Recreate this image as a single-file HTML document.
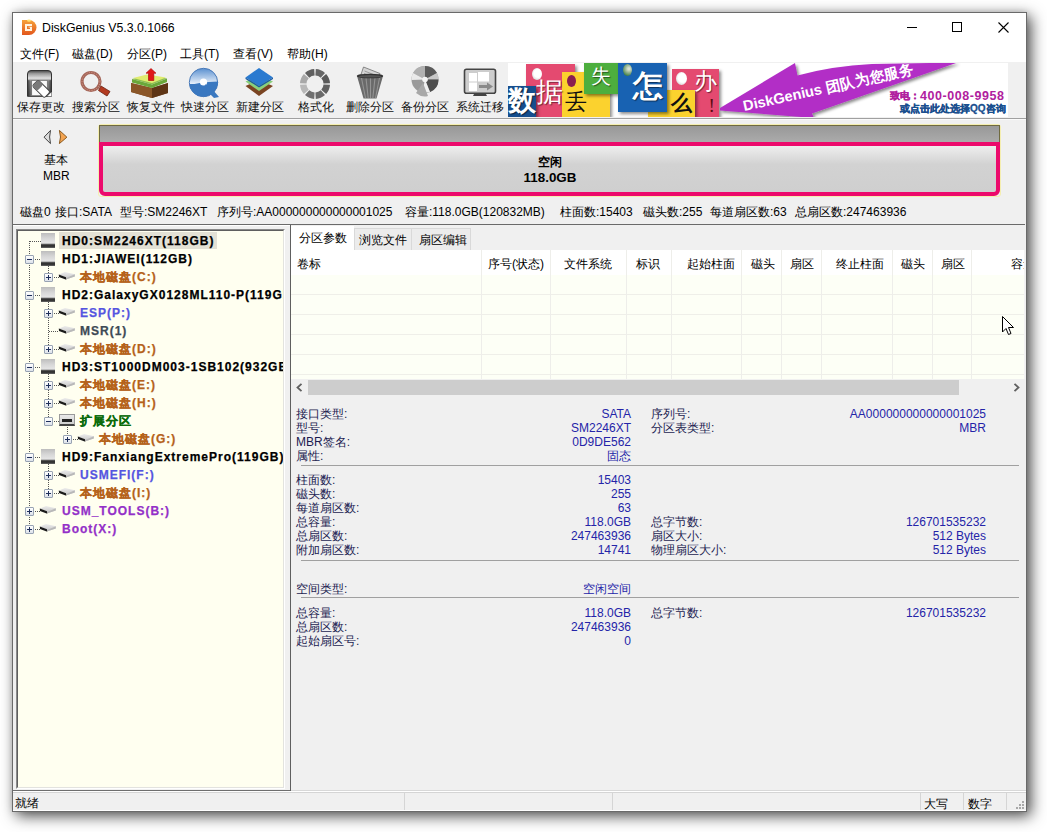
<!DOCTYPE html>
<html><head><meta charset="utf-8">
<style>
*{box-sizing:border-box;margin:0;padding:0}
html,body{width:1047px;height:832px;overflow:hidden;background:#fff}
body{position:relative;font-family:"Liberation Sans",sans-serif;font-size:12px;color:#000}
.a{position:absolute}
.t{position:absolute;white-space:nowrap;line-height:14px}
svg{position:absolute;overflow:visible}
</style></head><body>

<div class="a" style="left:12px;top:12px;width:1015px;height:800px;background:#f0f0f0;border:1px solid #6a6a6a;box-shadow:4px 4px 14px rgba(0,0,0,.7),0 0 6px rgba(0,0,0,.1)"></div>
<div class="a" style="left:13px;top:13px;width:1013px;height:49px;background:#fff"></div>
<svg style="left:22px;top:19px" width="15" height="16" viewBox="0 0 15 16">
<defs><linearGradient id="ig" x1="0" y1="0" x2="0" y2="1"><stop offset="0" stop-color="#f6a23a"/><stop offset="1" stop-color="#e2561c"/></linearGradient></defs>
<path d="M0 1 H7 A7.5 7.5 0 0 1 7 16 H0 Z" fill="url(#ig)"/>
<path d="M3 5 H10 V7 H5 V10 H8 V8.5 H6.5 V7.8 H10 V12 H3 Z" fill="#fff4e0"/>
<ellipse cx="7" cy="1.6" rx="2" ry="1.2" fill="#ffe070"/>
</svg>
<div class="t" style="left:42px;top:21px;font-size:12.3px">DiskGenius V5.3.0.1066</div>
<div class="a" style="left:907px;top:27px;width:10px;height:1px;background:#000"></div>
<div class="a" style="left:952px;top:22px;width:10px;height:10px;border:1px solid #000"></div>
<svg style="left:997.5px;top:21.5px" width="11" height="11"><path d="M0.5 0.5 L10.5 10.5 M10.5 0.5 L0.5 10.5" stroke="#000" stroke-width="1.1"/></svg>
<div class="t" style="left:20px;top:47px;">文件(F)</div>
<div class="t" style="left:72px;top:47px;">磁盘(D)</div>
<div class="t" style="left:127px;top:47px;">分区(P)</div>
<div class="t" style="left:180px;top:47px;">工具(T)</div>
<div class="t" style="left:233px;top:47px;">查看(V)</div>
<div class="t" style="left:287px;top:47px;">帮助(H)</div>
<div class="a" style="left:13px;top:118px;width:1013px;height:1px;background:#a0a0a0"></div>
<div class="a" style="left:13px;top:119px;width:1013px;height:1px;background:#fafafa"></div>
<div class="t" style="left:17px;top:100px;color:#111">保存更改</div>
<div class="t" style="left:72px;top:100px;color:#111">搜索分区</div>
<div class="t" style="left:127px;top:100px;color:#111">恢复文件</div>
<div class="t" style="left:181px;top:100px;color:#111">快速分区</div>
<div class="t" style="left:236px;top:100px;color:#111">新建分区</div>
<div class="t" style="left:298px;top:100px;color:#111">格式化</div>
<div class="t" style="left:346px;top:100px;color:#111">删除分区</div>
<div class="t" style="left:401px;top:100px;color:#111">备份分区</div>
<div class="t" style="left:456px;top:100px;color:#111">系统迁移</div>
<svg style="left:27px;top:70px" width="26" height="27" viewBox="0 0 26 27"><defs><linearGradient id="sg" x1="0" y1="0" x2="0" y2="1"><stop offset="0" stop-color="#444"/><stop offset=".12" stop-color="#9a9a9a"/><stop offset=".3" stop-color="#e0e0e0"/><stop offset=".42" stop-color="#777"/><stop offset="1" stop-color="#333"/></linearGradient>
<linearGradient id="sg2" x1="0" y1="0" x2="1" y2="0"><stop offset="0" stop-color="#2a2a2a"/><stop offset=".15" stop-color="#aaa"/><stop offset=".85" stop-color="#aaa"/><stop offset="1" stop-color="#2a2a2a"/></linearGradient></defs>
<path d="M0.5 4 Q0.5 0.5 4 0.5 H21 Q24.5 0.5 24.5 4 V26.3 H0.5 Z" fill="url(#sg)" stroke="#333" stroke-width="1"/>
<rect x="1" y="10" width="23" height="16" fill="url(#sg2)" opacity=".55"/>
<rect x="4.8" y="10.6" width="15.4" height="15" fill="#fafafa" stroke="#555" stroke-width=".5"/>
<g transform="rotate(45 13 18)"><rect x="6" y="13.5" width="17" height="8.5" rx="2" fill="#fff" stroke="#444" stroke-width="1"/><rect x="6" y="13.5" width="7" height="8.5" rx="2" fill="#7a7a7a"/></g>
<path d="M20.5 26.3 H24.5 V22" fill="#fff"/></svg>
<svg style="left:78px;top:69px" width="34" height="28" viewBox="0 0 34 28"><circle cx="13" cy="12.5" r="9" fill="none" stroke="#a5675a" stroke-width="3.2"/>
<circle cx="13" cy="12.5" r="9" fill="none" stroke="#d99a8a" stroke-width="1" stroke-dasharray="1 1.5"/>
<path d="M23 17 L32 22.5 L29 27 L20.5 21.5 Z" fill="#b23a20" stroke="#6a2010" stroke-width=".8"/></svg>
<svg style="left:130px;top:67px" width="40" height="32" viewBox="0 0 40 32"><path d="M1 16 L22 21 L38 16 L38 26 L22 31 L1 25 Z" fill="#7b4a22"/>
<path d="M22 21 L38 16 L38 26 L22 31 Z" fill="#5e3516"/>
<path d="M1 16 L22 21 L22 31 L1 25 Z" fill="#8a5628"/>
<path d="M2 12 L17 8.5 L37 11.5 L22 17.5 Z" fill="#8fc050"/>
<path d="M2 12 L22 17.5 L37 11.5 L37 15 L22 21 L2 15.5 Z" fill="#6aa83a"/>
<path d="M3 11 L17 7.5 L36 10.5 L22 16 Z" fill="#e0ec70"/>
<path d="M21 1.5 L26 6.2 H23.8 V13.5 H18.5 V6.2 H16 Z" fill="#e01818" stroke="#a00" stroke-width=".6"/></svg>
<svg style="left:188px;top:67px" width="33" height="32" viewBox="0 0 33 32"><defs><linearGradient id="qg" x1="0" y1="0" x2="0" y2="1"><stop offset="0" stop-color="#5a90d0"/><stop offset=".55" stop-color="#e8f0fa"/><stop offset=".56" stop-color="#3a78c0"/><stop offset="1" stop-color="#2e68b0"/></linearGradient></defs>
<circle cx="15.5" cy="15.5" r="14.2" fill="url(#qg)" stroke="#4a7ab8" stroke-width="1"/>
<path d="M1.5 18.5 Q10 15 30 14.5 L30 17 Q28 25 18 29.5 L10 29 Q3 25 1.5 18.5 Z" fill="#3a78c0"/>
<circle cx="15.5" cy="15" r="3.6" fill="#fff"/>
<path d="M17 17 L25 23 L31 30 L26 31 L19 24 Z" fill="#3a78c0"/></svg>
<svg style="left:244px;top:67px" width="31" height="31" viewBox="0 0 31 31"><path d="M1.5 19 L15 13 L29 19 L15 29 Z" fill="#7a4422"/>
<path d="M1.5 14.5 L15 8.5 L29 14.5 L15 24 Z" fill="#8ad07a"/>
<path d="M1.5 10.5 L15 1 L29 10.5 L15 19 Z" fill="#2a7ad0"/>
<path d="M1.5 10.5 L15 19 L29 10.5 L29 12 L15 20.5 L1.5 12 Z" fill="#1a5aa0"/></svg>
<svg style="left:299px;top:68px" width="32" height="32" viewBox="0 0 32 32"><path d="M16.8 1.0 A15 15 0 0 1 26.0 4.9 L21.7 9.7 A8.5 8.5 0 0 0 16.4 7.5 Z" fill="#666"/><path d="M27.1 6.0 A15 15 0 0 1 31.0 15.2 L24.5 15.6 A8.5 8.5 0 0 0 22.3 10.3 Z" fill="#5a5a5a"/><path d="M31.0 16.8 A15 15 0 0 1 27.1 26.0 L22.3 21.7 A8.5 8.5 0 0 0 24.5 16.4 Z" fill="#606060"/><path d="M26.0 27.1 A15 15 0 0 1 16.8 31.0 L16.4 24.5 A8.5 8.5 0 0 0 21.7 22.3 Z" fill="#6a6a6a"/><path d="M15.2 31.0 A15 15 0 0 1 6.0 27.1 L10.3 22.3 A8.5 8.5 0 0 0 15.6 24.5 Z" fill="#707070"/><path d="M4.9 26.0 A15 15 0 0 1 1.0 16.8 L7.5 16.4 A8.5 8.5 0 0 0 9.7 21.7 Z" fill="#b8b8b8"/><path d="M1.0 15.2 A15 15 0 0 1 4.9 6.0 L9.7 10.3 A8.5 8.5 0 0 0 7.5 15.6 Z" fill="#a8a8a8"/><path d="M6.0 4.9 A15 15 0 0 1 15.2 1.0 L15.6 7.5 A8.5 8.5 0 0 0 10.3 9.7 Z" fill="#606060"/></svg>
<svg style="left:355px;top:66px" width="30" height="34" viewBox="0 0 30 34"><path d="M5.5 10 L8.5 1 L25 7.5 L23.5 11 Z" fill="#d4d4d4" stroke="#7a7a7a" stroke-width=".9"/>
<path d="M9.5 5 L21 9.5 M9 7.5 L19 11" stroke="#9a9a9a" stroke-width="1"/>
<path d="M2 10 L28 10 L21.5 32.5 L8.5 32.5 Z" fill="#6a6a6a"/>
<path d="M6.5 12 L10.5 32 M11 12 L13.2 32 M15.5 12 L15.5 32 M20 12 L17.8 32 M24.5 12 L20.5 32" stroke="#949494" stroke-width="1.1"/>
<ellipse cx="15" cy="10" rx="13.2" ry="2.3" fill="#333"/>
<ellipse cx="15" cy="10.3" rx="11.5" ry="1.3" fill="#555"/></svg>
<svg style="left:410px;top:65px" width="32" height="34" viewBox="0 0 32 34"><circle cx="15" cy="14.5" r="13.5" fill="#9a9a9a"/>
<path d="M15 14.5 L15 1 A13.5 13.5 0 0 1 27 8 Z" fill="#5a5a5a"/>
<path d="M15 14.5 L27 8 A13.5 13.5 0 0 1 28.5 14.5 Z" fill="#c8c8c8"/>
<path d="M15 14.5 L28.5 14.5 A13.5 13.5 0 0 1 20 27 Z" fill="#4e4e4e"/>
<path d="M15 14.5 L3 8 A13.5 13.5 0 0 1 15 1 Z" fill="#b0b0b0"/>
<path d="M15 14.5 L1.5 15 A13.5 13.5 0 0 1 3 8 Z" fill="#eaeaea"/>
<path d="M15 14.5 L20 27 L12 28 Z" fill="#f0f0f0"/>
<path d="M13 18 L18 31 Q12 33 6 28 Z" fill="#a8a8a8"/>
<circle cx="15" cy="14.5" r="2.8" fill="#f4f4f4"/></svg>
<svg style="left:463px;top:68px" width="35" height="30" viewBox="0 0 35 30"><rect x="1.5" y="1.3" width="31" height="24" rx="2" fill="#cdcdcd" stroke="#444" stroke-width="1.6"/>
<rect x="6" y="5" width="8" height="8.5" fill="#fff"/>
<rect x="15" y="4" width="11" height="9.5" fill="#fff"/>
<rect x="6" y="14.5" width="8" height="8.5" fill="#fff"/>
<path d="M16 17 H24 V14.5 L30 18.5 L24 22.5 V20 H16 Z" fill="#8a8a8a"/>
<path d="M11 26 H23 L24 28 H10 Z" fill="#444"/></svg>
<div class="a" style="left:508px;top:63px;width:500px;height:54px;background:#fff;overflow:hidden">
<div class="a" style="left:18px;top:1px;width:49px;height:53px;background:#e44a70;box-shadow:2px 2px 3px rgba(0,0,0,.45);"></div>
<div class="a" style="left:24px;top:5px;width:10px;height:12px;border-radius:50%;background:radial-gradient(circle at 60% 45%,#fff 45%,#bbb 100%)"></div>
<div class="a" style="left:0px;top:23px;width:28px;height:31px;background:#164e8e;box-shadow:2px 2px 3px rgba(0,0,0,.45);"></div>
<div class="a" style="left:54px;top:9px;width:48px;height:45px;background:#fbd22e;box-shadow:2px 2px 3px rgba(0,0,0,.45);"></div>
<div class="a" style="left:58.5px;top:12px;width:9.0px;height:12px;border-radius:50%;background:#8a1e50"></div>
<div class="a" style="left:76px;top:0px;width:34px;height:31px;background:#4dae3e;box-shadow:2px 2px 3px rgba(0,0,0,.45);"></div>
<div class="a" style="left:164px;top:6px;width:47px;height:48px;background:#e44a70;box-shadow:2px 2px 3px rgba(0,0,0,.45);"></div>
<div class="a" style="left:167.5px;top:8.5px;width:11.0px;height:13.0px;border-radius:50%;background:radial-gradient(circle at 60% 45%,#fff 45%,#bbb 100%)"></div>
<div class="a" style="left:140px;top:27px;width:47px;height:27px;background:#fbd22e;box-shadow:2px 2px 3px rgba(0,0,0,.45);"></div>
<div class="a" style="left:110px;top:0px;width:49px;height:49px;background:#1862b2;box-shadow:2px 2px 3px rgba(0,0,0,.45);"></div>
<div class="a" style="left:114.5px;top:1px;width:9.0px;height:12px;border-radius:50%;background:radial-gradient(circle at 65% 40%,#d8e0d0 10%,#3a7a40 80%)"></div>
<div class="t" style="left:0px;top:24px;font-size:28px;line-height:28px;color:#fff;font-weight:bold;text-shadow:1px 1px 1px rgba(0,0,0,.5)">数</div>
<div class="t" style="left:28px;top:16px;font-size:27px;line-height:27px;color:#fff;text-shadow:1px 1px 1px rgba(0,0,0,.5)">据</div>
<div class="t" style="left:57px;top:28px;font-size:22px;line-height:22px;color:#111;">丢</div>
<div class="t" style="left:83px;top:3px;font-size:20px;line-height:20px;color:#fff;text-shadow:1px 1px 1px rgba(0,0,0,.5)">失</div>
<div class="t" style="left:125px;top:8px;font-size:30px;line-height:30px;color:#fff;font-weight:bold;text-shadow:1px 1px 1px rgba(0,0,0,.5)">怎</div>
<div class="t" style="left:163px;top:29px;font-size:21px;line-height:21px;color:#111;font-weight:bold">么</div>
<div class="t" style="left:186px;top:7px;font-size:23px;line-height:23px;color:#fff;text-shadow:1px 1px 1px rgba(0,0,0,.5)">办</div>
<div class="t" style="left:200.5px;top:33px;font-size:19px;line-height:19px;color:#5a0a10;font-family:Liberation Serif">!</div>
<svg style="left:0;top:0" width="500" height="54" viewBox="508 63 500 54"><defs><filter id="fs" x="-10%" y="-20%" width="130%" height="150%"><feDropShadow dx="2" dy="2" stdDeviation="1.5" flood-opacity=".45"/></filter></defs><path d="M720 108 L795 63 L797.5 75.5 Q832 66 872 64 L957.5 62.5 L812 113.5 L814 118 L720 110.5 Z" fill="#b22ec6" filter="url(#fs)"/></svg>
<div class="t" style="left:237px;top:35px;font-size:14.6px;line-height:16px;font-weight:bold;color:#fff;transform:rotate(-12.5deg);transform-origin:0 100%">DiskGenius 团队为您服务</div>
<div class="t" style="left:382px;top:26px;font-size:10px;font-weight:bold;color:#b0209e;-webkit-text-stroke:.3px #b0209e">致电：</div>
<div class="t" style="left:412px;top:26px;font-size:12.5px;font-weight:bold;color:#b0209e;letter-spacing:0.55px">400-008-9958</div>
<div class="t" style="left:392px;top:39px;font-size:10px;font-weight:bold;color:#1a4f8e;letter-spacing:0px;-webkit-text-stroke:.3px #1a4f8e">或点击此处选择QQ咨询</div>
</div>
<svg style="left:40px;top:126px" width="32" height="22" viewBox="0 0 32 22"><path d="M10.5 4.4 L4 11.2 L10.5 17.6 L9.6 11 Z" fill="#dcdcdc" stroke="#444" stroke-width="1" stroke-linejoin="round"/><path d="M19.4 4.4 L26.9 11.2 L19.4 17.6 L20.5 11 Z" fill="#f4a452" stroke="#8a5a20" stroke-width="1" stroke-linejoin="round"/></svg>
<div class="t" style="left:44px;top:153px;">基本</div>
<div class="t" style="left:43px;top:169px;">MBR</div>
<div class="a" style="left:98px;top:124px;width:903px;height:73px;border:1px solid #f4eeb0;border-radius:3px"></div>
<div class="a" style="left:99px;top:125px;width:901px;height:17px;background:linear-gradient(#989898,#ababab);border:1px solid #6f6a40;border-bottom:none"></div>
<div class="a" style="left:99px;top:142px;width:901px;height:54px;border:4px solid #ec0a6c;border-radius:0 0 6px 6px;background:linear-gradient(#eeeeee,#d2d2d2 40%,#cfcfcf)"></div>
<div class="t" style="left:350px;top:155px;width:400px;text-align:center;font-weight:bold">空闲</div>
<div class="t" style="left:350px;top:171px;width:400px;text-align:center;font-weight:bold;font-size:13.4px">118.0GB</div>
<div class="t" style="left:20px;top:205px;">磁盘0</div>
<div class="t" style="left:55px;top:205px;">接口:SATA</div>
<div class="t" style="left:120px;top:205px;">型号:SM2246XT</div>
<div class="t" style="left:217px;top:205px;">序列号:AA000000000000001025</div>
<div class="t" style="left:405px;top:205px;">容量:118.0GB(120832MB)</div>
<div class="t" style="left:560px;top:205px;">柱面数:15403</div>
<div class="t" style="left:643px;top:205px;">磁头数:255</div>
<div class="t" style="left:710px;top:205px;">每道扇区数:63</div>
<div class="t" style="left:795px;top:205px;">总扇区数:247463936</div>
<div class="a" style="left:13px;top:224px;width:1012px;height:1px;background:#6a6a6a"></div>
<div class="a" style="left:13px;top:225px;width:1012px;height:1px;background:#fff"></div>
<div class="a" style="left:16px;top:229px;width:269px;height:560px;border-top:1px solid #8a8a8a;border-left:1px solid #8a8a8a;border-right:1px solid #fff;border-bottom:1px solid #fff"></div>
<div class="a" style="left:17px;top:230px;width:267px;height:558px;border-top:1px solid #5f5f5f;border-left:1px solid #5f5f5f;border-right:1px solid #e3e3df;border-bottom:1px solid #e3e3df;background:#fffff0"></div>
<div class="a" style="left:13px;top:790px;width:278px;height:1px;background:#6e6e6e"></div>
<div class="a" style="left:18px;top:231px;width:265px;height:556px;overflow:hidden">
<div class="a" style="left:41px;top:1px;width:158px;height:17px;background:#e3e1d5"></div>
<div class="a" style="left:11px;top:10px;width:1px;height:288px;background:repeating-linear-gradient(#555 0 1px,transparent 1px 2px)"></div>
<div class="a" style="left:30px;top:35px;width:1px;height:11px;background:repeating-linear-gradient(#555 0 1px,transparent 1px 2px)"></div>
<div class="a" style="left:30px;top:71px;width:1px;height:47px;background:repeating-linear-gradient(#555 0 1px,transparent 1px 2px)"></div>
<div class="a" style="left:30px;top:143px;width:1px;height:47px;background:repeating-linear-gradient(#555 0 1px,transparent 1px 2px)"></div>
<div class="a" style="left:30px;top:233px;width:1px;height:29px;background:repeating-linear-gradient(#555 0 1px,transparent 1px 2px)"></div>
<div class="a" style="left:49px;top:196px;width:1px;height:8px;background:repeating-linear-gradient(#555 0 1px,transparent 1px 2px)"></div>
<div class="a" style="left:12px;top:10px;width:11px;height:1px;background:repeating-linear-gradient(90deg,#555 0 1px,transparent 1px 2px)"></div>
<div class="a" style="left:23px;top:2px;width:14px;height:15px;background:linear-gradient(#bdbdbd,#d6d6d6 35%,#e4e4e4 66%,#a8a8a8 72%,#3a3a3a 78%,#2c2c2c 88%,#6a6a6a)"></div>
<div class="t" style="left:44px;top:3px;color:#000;font-weight:bold;letter-spacing:1px;-webkit-text-stroke:.25px currentColor">HD0:SM2246XT(118GB)</div>
<div class="a" style="left:7px;top:24px;width:9px;height:9px;border:1px solid #98a3b3;background:linear-gradient(#fff,#dde2ea);border-radius:1px"></div>
<div class="a" style="left:9px;top:28px;width:5px;height:1px;background:#1e2e5a"></div>
<div class="a" style="left:17px;top:28px;width:6px;height:1px;background:repeating-linear-gradient(90deg,#555 0 1px,transparent 1px 2px)"></div>
<div class="a" style="left:23px;top:20px;width:14px;height:15px;background:linear-gradient(#bdbdbd,#d6d6d6 35%,#e4e4e4 66%,#a8a8a8 72%,#3a3a3a 78%,#2c2c2c 88%,#6a6a6a)"></div>
<div class="t" style="left:44px;top:21px;color:#000;font-weight:bold;letter-spacing:1px;-webkit-text-stroke:.25px currentColor">HD1:JIAWEI(112GB)</div>
<div class="a" style="left:26px;top:42px;width:9px;height:9px;border:1px solid #98a3b3;background:linear-gradient(#fff,#dde2ea);border-radius:1px"></div>
<div class="a" style="left:28px;top:46px;width:5px;height:1px;background:#1e2e5a"></div>
<div class="a" style="left:30px;top:44px;width:1px;height:5px;background:#1e2e5a"></div>
<div class="a" style="left:36px;top:46px;width:5px;height:1px;background:repeating-linear-gradient(90deg,#555 0 1px,transparent 1px 2px)"></div>
<svg style="left:40px;top:41px" width="18" height="9" viewBox="0 0 18 9"><defs><linearGradient id="pg58277" x1="0" y1="0" x2="0" y2="1"><stop offset="0" stop-color="#ececec"/><stop offset="1" stop-color="#c4c4c4"/></linearGradient></defs><path d="M1 2.5 L7 0 L16.8 2.3 L16.8 4.5 L8.5 7.3 L8 5.5 Z" fill="url(#pg58277)"/><path d="M16.8 2.3 L16.8 4.5 L8.5 7.3 L8.3 6 Z" fill="#b8b8b8"/><path d="M0.8 2.4 L8 5.3 L8.3 7.8 L1 5 Z" fill="#1a1a1a"/></svg>
<div class="t" style="left:62px;top:39px;color:#b5621a;font-weight:bold;letter-spacing:1px;-webkit-text-stroke:.25px currentColor">本地磁盘(C:)</div>
<div class="a" style="left:7px;top:60px;width:9px;height:9px;border:1px solid #98a3b3;background:linear-gradient(#fff,#dde2ea);border-radius:1px"></div>
<div class="a" style="left:9px;top:64px;width:5px;height:1px;background:#1e2e5a"></div>
<div class="a" style="left:17px;top:64px;width:6px;height:1px;background:repeating-linear-gradient(90deg,#555 0 1px,transparent 1px 2px)"></div>
<div class="a" style="left:23px;top:56px;width:14px;height:15px;background:linear-gradient(#bdbdbd,#d6d6d6 35%,#e4e4e4 66%,#a8a8a8 72%,#3a3a3a 78%,#2c2c2c 88%,#6a6a6a)"></div>
<div class="t" style="left:44px;top:57px;color:#000;font-weight:bold;letter-spacing:1px;-webkit-text-stroke:.25px currentColor">HD2:GalaxyGX0128ML110-P(119GB)</div>
<div class="a" style="left:26px;top:78px;width:9px;height:9px;border:1px solid #98a3b3;background:linear-gradient(#fff,#dde2ea);border-radius:1px"></div>
<div class="a" style="left:28px;top:82px;width:5px;height:1px;background:#1e2e5a"></div>
<div class="a" style="left:30px;top:80px;width:1px;height:5px;background:#1e2e5a"></div>
<div class="a" style="left:36px;top:82px;width:5px;height:1px;background:repeating-linear-gradient(90deg,#555 0 1px,transparent 1px 2px)"></div>
<svg style="left:40px;top:77px" width="18" height="9" viewBox="0 0 18 9"><defs><linearGradient id="pg58313" x1="0" y1="0" x2="0" y2="1"><stop offset="0" stop-color="#ececec"/><stop offset="1" stop-color="#c4c4c4"/></linearGradient></defs><path d="M1 2.5 L7 0 L16.8 2.3 L16.8 4.5 L8.5 7.3 L8 5.5 Z" fill="url(#pg58313)"/><path d="M16.8 2.3 L16.8 4.5 L8.5 7.3 L8.3 6 Z" fill="#b8b8b8"/><path d="M0.8 2.4 L8 5.3 L8.3 7.8 L1 5 Z" fill="#1a1a1a"/></svg>
<div class="t" style="left:62px;top:75px;color:#5555e0;font-weight:bold;letter-spacing:1px;-webkit-text-stroke:.25px currentColor">ESP(P:)</div>
<div class="a" style="left:31px;top:100px;width:10px;height:1px;background:repeating-linear-gradient(90deg,#555 0 1px,transparent 1px 2px)"></div>
<svg style="left:40px;top:95px" width="18" height="9" viewBox="0 0 18 9"><defs><linearGradient id="pg58331" x1="0" y1="0" x2="0" y2="1"><stop offset="0" stop-color="#ececec"/><stop offset="1" stop-color="#c4c4c4"/></linearGradient></defs><path d="M1 2.5 L7 0 L16.8 2.3 L16.8 4.5 L8.5 7.3 L8 5.5 Z" fill="url(#pg58331)"/><path d="M16.8 2.3 L16.8 4.5 L8.5 7.3 L8.3 6 Z" fill="#b8b8b8"/><path d="M0.8 2.4 L8 5.3 L8.3 7.8 L1 5 Z" fill="#1a1a1a"/></svg>
<div class="t" style="left:62px;top:93px;color:#3d4a55;font-weight:bold;letter-spacing:1px;-webkit-text-stroke:.25px currentColor">MSR(1)</div>
<div class="a" style="left:26px;top:114px;width:9px;height:9px;border:1px solid #98a3b3;background:linear-gradient(#fff,#dde2ea);border-radius:1px"></div>
<div class="a" style="left:28px;top:118px;width:5px;height:1px;background:#1e2e5a"></div>
<div class="a" style="left:30px;top:116px;width:1px;height:5px;background:#1e2e5a"></div>
<div class="a" style="left:36px;top:118px;width:5px;height:1px;background:repeating-linear-gradient(90deg,#555 0 1px,transparent 1px 2px)"></div>
<svg style="left:40px;top:113px" width="18" height="9" viewBox="0 0 18 9"><defs><linearGradient id="pg58349" x1="0" y1="0" x2="0" y2="1"><stop offset="0" stop-color="#ececec"/><stop offset="1" stop-color="#c4c4c4"/></linearGradient></defs><path d="M1 2.5 L7 0 L16.8 2.3 L16.8 4.5 L8.5 7.3 L8 5.5 Z" fill="url(#pg58349)"/><path d="M16.8 2.3 L16.8 4.5 L8.5 7.3 L8.3 6 Z" fill="#b8b8b8"/><path d="M0.8 2.4 L8 5.3 L8.3 7.8 L1 5 Z" fill="#1a1a1a"/></svg>
<div class="t" style="left:62px;top:111px;color:#b5621a;font-weight:bold;letter-spacing:1px;-webkit-text-stroke:.25px currentColor">本地磁盘(D:)</div>
<div class="a" style="left:7px;top:132px;width:9px;height:9px;border:1px solid #98a3b3;background:linear-gradient(#fff,#dde2ea);border-radius:1px"></div>
<div class="a" style="left:9px;top:136px;width:5px;height:1px;background:#1e2e5a"></div>
<div class="a" style="left:17px;top:136px;width:6px;height:1px;background:repeating-linear-gradient(90deg,#555 0 1px,transparent 1px 2px)"></div>
<div class="a" style="left:23px;top:128px;width:14px;height:15px;background:linear-gradient(#bdbdbd,#d6d6d6 35%,#e4e4e4 66%,#a8a8a8 72%,#3a3a3a 78%,#2c2c2c 88%,#6a6a6a)"></div>
<div class="t" style="left:44px;top:129px;color:#000;font-weight:bold;letter-spacing:1px;-webkit-text-stroke:.25px currentColor">HD3:ST1000DM003-1SB102(932GB)</div>
<div class="a" style="left:26px;top:150px;width:9px;height:9px;border:1px solid #98a3b3;background:linear-gradient(#fff,#dde2ea);border-radius:1px"></div>
<div class="a" style="left:28px;top:154px;width:5px;height:1px;background:#1e2e5a"></div>
<div class="a" style="left:30px;top:152px;width:1px;height:5px;background:#1e2e5a"></div>
<div class="a" style="left:36px;top:154px;width:5px;height:1px;background:repeating-linear-gradient(90deg,#555 0 1px,transparent 1px 2px)"></div>
<svg style="left:40px;top:149px" width="18" height="9" viewBox="0 0 18 9"><defs><linearGradient id="pg58385" x1="0" y1="0" x2="0" y2="1"><stop offset="0" stop-color="#ececec"/><stop offset="1" stop-color="#c4c4c4"/></linearGradient></defs><path d="M1 2.5 L7 0 L16.8 2.3 L16.8 4.5 L8.5 7.3 L8 5.5 Z" fill="url(#pg58385)"/><path d="M16.8 2.3 L16.8 4.5 L8.5 7.3 L8.3 6 Z" fill="#b8b8b8"/><path d="M0.8 2.4 L8 5.3 L8.3 7.8 L1 5 Z" fill="#1a1a1a"/></svg>
<div class="t" style="left:62px;top:147px;color:#b5621a;font-weight:bold;letter-spacing:1px;-webkit-text-stroke:.25px currentColor">本地磁盘(E:)</div>
<div class="a" style="left:26px;top:168px;width:9px;height:9px;border:1px solid #98a3b3;background:linear-gradient(#fff,#dde2ea);border-radius:1px"></div>
<div class="a" style="left:28px;top:172px;width:5px;height:1px;background:#1e2e5a"></div>
<div class="a" style="left:30px;top:170px;width:1px;height:5px;background:#1e2e5a"></div>
<div class="a" style="left:36px;top:172px;width:5px;height:1px;background:repeating-linear-gradient(90deg,#555 0 1px,transparent 1px 2px)"></div>
<svg style="left:40px;top:167px" width="18" height="9" viewBox="0 0 18 9"><defs><linearGradient id="pg58403" x1="0" y1="0" x2="0" y2="1"><stop offset="0" stop-color="#ececec"/><stop offset="1" stop-color="#c4c4c4"/></linearGradient></defs><path d="M1 2.5 L7 0 L16.8 2.3 L16.8 4.5 L8.5 7.3 L8 5.5 Z" fill="url(#pg58403)"/><path d="M16.8 2.3 L16.8 4.5 L8.5 7.3 L8.3 6 Z" fill="#b8b8b8"/><path d="M0.8 2.4 L8 5.3 L8.3 7.8 L1 5 Z" fill="#1a1a1a"/></svg>
<div class="t" style="left:62px;top:165px;color:#b5621a;font-weight:bold;letter-spacing:1px;-webkit-text-stroke:.25px currentColor">本地磁盘(H:)</div>
<div class="a" style="left:26px;top:186px;width:9px;height:9px;border:1px solid #98a3b3;background:linear-gradient(#fff,#dde2ea);border-radius:1px"></div>
<div class="a" style="left:28px;top:190px;width:5px;height:1px;background:#1e2e5a"></div>
<div class="a" style="left:36px;top:190px;width:5px;height:1px;background:repeating-linear-gradient(90deg,#555 0 1px,transparent 1px 2px)"></div>
<div class="a" style="left:41px;top:183px;width:16px;height:12px;background:linear-gradient(#eaeaea,#cfcfcf);border:1px solid #9a9a9a;border-bottom:2px solid #444"></div>
<div class="a" style="left:44px;top:188px;width:10px;height:3px;background:#222"></div>
<div class="t" style="left:62px;top:183px;color:#0b6b0b;font-weight:bold;letter-spacing:1px;-webkit-text-stroke:.25px currentColor">扩展分区</div>
<div class="a" style="left:45px;top:204px;width:9px;height:9px;border:1px solid #98a3b3;background:linear-gradient(#fff,#dde2ea);border-radius:1px"></div>
<div class="a" style="left:47px;top:208px;width:5px;height:1px;background:#1e2e5a"></div>
<div class="a" style="left:49px;top:206px;width:1px;height:5px;background:#1e2e5a"></div>
<div class="a" style="left:55px;top:208px;width:5px;height:1px;background:repeating-linear-gradient(90deg,#555 0 1px,transparent 1px 2px)"></div>
<svg style="left:59px;top:203px" width="18" height="9" viewBox="0 0 18 9"><defs><linearGradient id="pg77439" x1="0" y1="0" x2="0" y2="1"><stop offset="0" stop-color="#ececec"/><stop offset="1" stop-color="#c4c4c4"/></linearGradient></defs><path d="M1 2.5 L7 0 L16.8 2.3 L16.8 4.5 L8.5 7.3 L8 5.5 Z" fill="url(#pg77439)"/><path d="M16.8 2.3 L16.8 4.5 L8.5 7.3 L8.3 6 Z" fill="#b8b8b8"/><path d="M0.8 2.4 L8 5.3 L8.3 7.8 L1 5 Z" fill="#1a1a1a"/></svg>
<div class="t" style="left:81px;top:201px;color:#b5621a;font-weight:bold;letter-spacing:1px;-webkit-text-stroke:.25px currentColor">本地磁盘(G:)</div>
<div class="a" style="left:7px;top:222px;width:9px;height:9px;border:1px solid #98a3b3;background:linear-gradient(#fff,#dde2ea);border-radius:1px"></div>
<div class="a" style="left:9px;top:226px;width:5px;height:1px;background:#1e2e5a"></div>
<div class="a" style="left:17px;top:226px;width:6px;height:1px;background:repeating-linear-gradient(90deg,#555 0 1px,transparent 1px 2px)"></div>
<div class="a" style="left:23px;top:218px;width:14px;height:15px;background:linear-gradient(#bdbdbd,#d6d6d6 35%,#e4e4e4 66%,#a8a8a8 72%,#3a3a3a 78%,#2c2c2c 88%,#6a6a6a)"></div>
<div class="t" style="left:44px;top:219px;color:#000;font-weight:bold;letter-spacing:1px;-webkit-text-stroke:.25px currentColor">HD9:FanxiangExtremePro(119GB)</div>
<div class="a" style="left:26px;top:240px;width:9px;height:9px;border:1px solid #98a3b3;background:linear-gradient(#fff,#dde2ea);border-radius:1px"></div>
<div class="a" style="left:28px;top:244px;width:5px;height:1px;background:#1e2e5a"></div>
<div class="a" style="left:30px;top:242px;width:1px;height:5px;background:#1e2e5a"></div>
<div class="a" style="left:36px;top:244px;width:5px;height:1px;background:repeating-linear-gradient(90deg,#555 0 1px,transparent 1px 2px)"></div>
<svg style="left:40px;top:239px" width="18" height="9" viewBox="0 0 18 9"><defs><linearGradient id="pg58475" x1="0" y1="0" x2="0" y2="1"><stop offset="0" stop-color="#ececec"/><stop offset="1" stop-color="#c4c4c4"/></linearGradient></defs><path d="M1 2.5 L7 0 L16.8 2.3 L16.8 4.5 L8.5 7.3 L8 5.5 Z" fill="url(#pg58475)"/><path d="M16.8 2.3 L16.8 4.5 L8.5 7.3 L8.3 6 Z" fill="#b8b8b8"/><path d="M0.8 2.4 L8 5.3 L8.3 7.8 L1 5 Z" fill="#1a1a1a"/></svg>
<div class="t" style="left:62px;top:237px;color:#5555e0;font-weight:bold;letter-spacing:1px;-webkit-text-stroke:.25px currentColor">USMEFI(F:)</div>
<div class="a" style="left:26px;top:258px;width:9px;height:9px;border:1px solid #98a3b3;background:linear-gradient(#fff,#dde2ea);border-radius:1px"></div>
<div class="a" style="left:28px;top:262px;width:5px;height:1px;background:#1e2e5a"></div>
<div class="a" style="left:30px;top:260px;width:1px;height:5px;background:#1e2e5a"></div>
<div class="a" style="left:36px;top:262px;width:5px;height:1px;background:repeating-linear-gradient(90deg,#555 0 1px,transparent 1px 2px)"></div>
<svg style="left:40px;top:257px" width="18" height="9" viewBox="0 0 18 9"><defs><linearGradient id="pg58493" x1="0" y1="0" x2="0" y2="1"><stop offset="0" stop-color="#ececec"/><stop offset="1" stop-color="#c4c4c4"/></linearGradient></defs><path d="M1 2.5 L7 0 L16.8 2.3 L16.8 4.5 L8.5 7.3 L8 5.5 Z" fill="url(#pg58493)"/><path d="M16.8 2.3 L16.8 4.5 L8.5 7.3 L8.3 6 Z" fill="#b8b8b8"/><path d="M0.8 2.4 L8 5.3 L8.3 7.8 L1 5 Z" fill="#1a1a1a"/></svg>
<div class="t" style="left:62px;top:255px;color:#b5621a;font-weight:bold;letter-spacing:1px;-webkit-text-stroke:.25px currentColor">本地磁盘(I:)</div>
<div class="a" style="left:7px;top:276px;width:9px;height:9px;border:1px solid #98a3b3;background:linear-gradient(#fff,#dde2ea);border-radius:1px"></div>
<div class="a" style="left:9px;top:280px;width:5px;height:1px;background:#1e2e5a"></div>
<div class="a" style="left:11px;top:278px;width:1px;height:5px;background:#1e2e5a"></div>
<div class="a" style="left:17px;top:280px;width:6px;height:1px;background:repeating-linear-gradient(90deg,#555 0 1px,transparent 1px 2px)"></div>
<svg style="left:21px;top:275px" width="18" height="9" viewBox="0 0 18 9"><defs><linearGradient id="pg39511" x1="0" y1="0" x2="0" y2="1"><stop offset="0" stop-color="#ececec"/><stop offset="1" stop-color="#c4c4c4"/></linearGradient></defs><path d="M1 2.5 L7 0 L16.8 2.3 L16.8 4.5 L8.5 7.3 L8 5.5 Z" fill="url(#pg39511)"/><path d="M16.8 2.3 L16.8 4.5 L8.5 7.3 L8.3 6 Z" fill="#b8b8b8"/><path d="M0.8 2.4 L8 5.3 L8.3 7.8 L1 5 Z" fill="#1a1a1a"/></svg>
<div class="t" style="left:44px;top:273px;color:#9330c8;font-weight:bold;letter-spacing:1px;-webkit-text-stroke:.25px currentColor">USM_TOOLS(B:)</div>
<div class="a" style="left:7px;top:294px;width:9px;height:9px;border:1px solid #98a3b3;background:linear-gradient(#fff,#dde2ea);border-radius:1px"></div>
<div class="a" style="left:9px;top:298px;width:5px;height:1px;background:#1e2e5a"></div>
<div class="a" style="left:11px;top:296px;width:1px;height:5px;background:#1e2e5a"></div>
<div class="a" style="left:17px;top:298px;width:6px;height:1px;background:repeating-linear-gradient(90deg,#555 0 1px,transparent 1px 2px)"></div>
<svg style="left:21px;top:293px" width="18" height="9" viewBox="0 0 18 9"><defs><linearGradient id="pg39529" x1="0" y1="0" x2="0" y2="1"><stop offset="0" stop-color="#ececec"/><stop offset="1" stop-color="#c4c4c4"/></linearGradient></defs><path d="M1 2.5 L7 0 L16.8 2.3 L16.8 4.5 L8.5 7.3 L8 5.5 Z" fill="url(#pg39529)"/><path d="M16.8 2.3 L16.8 4.5 L8.5 7.3 L8.3 6 Z" fill="#b8b8b8"/><path d="M0.8 2.4 L8 5.3 L8.3 7.8 L1 5 Z" fill="#1a1a1a"/></svg>
<div class="t" style="left:44px;top:291px;color:#9330c8;font-weight:bold;letter-spacing:1px;-webkit-text-stroke:.25px currentColor">Boot(X:)</div>
</div>
<div class="a" style="left:290px;top:225px;width:735px;height:566px;border-left:1px solid #5f5f5f;background:#f0f0f0"></div>
<div class="a" style="left:291px;top:226px;width:734px;height:24px;background:#f0f0f0"></div>
<div class="a" style="left:291px;top:226px;width:63px;height:24px;background:#fff"></div>
<div class="a" style="left:354px;top:228px;width:58px;height:22px;background:#ececec;border:1px solid #d9d9d9;border-bottom:none"></div>
<div class="a" style="left:412px;top:228px;width:59px;height:22px;background:#ececec;border:1px solid #d9d9d9;border-bottom:none;border-left:none"></div>
<div class="t" style="left:299px;top:231px;">分区参数</div>
<div class="t" style="left:359px;top:233px;">浏览文件</div>
<div class="t" style="left:419px;top:233px;">扇区编辑</div>
<div class="a" style="left:291px;top:250px;width:733px;height:25px;background:#fff"></div>
<div class="a" style="left:291px;top:275px;width:733px;height:104px;background:#fdfff6"></div>
<div class="a" style="left:291px;top:294px;width:733px;height:1px;background:#efefe9"></div>
<div class="a" style="left:291px;top:314px;width:733px;height:1px;background:#efefe9"></div>
<div class="a" style="left:291px;top:334px;width:733px;height:1px;background:#efefe9"></div>
<div class="a" style="left:291px;top:354px;width:733px;height:1px;background:#efefe9"></div>
<div class="a" style="left:291px;top:374px;width:733px;height:1px;background:#efefe9"></div>
<div class="a" style="left:481px;top:250px;width:1px;height:129px;background:#eeeeea"></div>
<div class="a" style="left:550px;top:250px;width:1px;height:129px;background:#eeeeea"></div>
<div class="a" style="left:626px;top:250px;width:1px;height:129px;background:#eeeeea"></div>
<div class="a" style="left:671px;top:250px;width:1px;height:129px;background:#eeeeea"></div>
<div class="a" style="left:741px;top:250px;width:1px;height:129px;background:#eeeeea"></div>
<div class="a" style="left:781px;top:250px;width:1px;height:129px;background:#eeeeea"></div>
<div class="a" style="left:821px;top:250px;width:1px;height:129px;background:#eeeeea"></div>
<div class="a" style="left:892px;top:250px;width:1px;height:129px;background:#eeeeea"></div>
<div class="a" style="left:932px;top:250px;width:1px;height:129px;background:#eeeeea"></div>
<div class="a" style="left:971px;top:250px;width:1px;height:129px;background:#eeeeea"></div>
<div class="a" style="left:1024px;top:250px;width:1px;height:129px;background:#f4f4f4"></div>
<div class="t" style="left:297px;top:257px;">卷标</div>
<div class="t" style="left:488px;top:257px;">序号(状态)</div>
<div class="t" style="left:564px;top:257px;">文件系统</div>
<div class="t" style="left:636px;top:257px;">标识</div>
<div class="t" style="left:687px;top:257px;">起始柱面</div>
<div class="t" style="left:751px;top:257px;">磁头</div>
<div class="t" style="left:790px;top:257px;">扇区</div>
<div class="t" style="left:836px;top:257px;">终止柱面</div>
<div class="t" style="left:901px;top:257px;">磁头</div>
<div class="t" style="left:941px;top:257px;">扇区</div>
<div class="a" style="left:1011px;top:250px;width:13px;height:25px;overflow:hidden"><div class="t" style="left:0;top:7px">容量</div></div>
<div class="a" style="left:291px;top:379px;width:733px;height:17px;background:#f0f0f0"></div>
<div class="a" style="left:308px;top:380px;width:651px;height:15px;background:#cdcdcd"></div>
<svg style="left:296px;top:383px" width="7" height="9"><path d="M5.5 0.8 L1.5 4.5 L5.5 8.2" fill="none" stroke="#606060" stroke-width="1.8"/></svg>
<svg style="left:1013px;top:383px" width="7" height="9"><path d="M1.5 0.8 L5.5 4.5 L1.5 8.2" fill="none" stroke="#606060" stroke-width="1.8"/></svg>
<svg style="left:1002px;top:316px" width="13" height="20" viewBox="0 0 13 20"><path d="M0.5 0.5 L0.5 16 L4 12.5 L6.5 18.5 L9 17.5 L6.5 11.5 L11.5 11.5 Z" fill="#fff" stroke="#000" stroke-width="1" stroke-linejoin="round"/></svg>
<div class="t" style="left:296px;top:407px;color:#1c1c50">接口类型:</div>
<div class="t" style="left:231px;top:407px;width:400px;text-align:right;color:#2424a8">SATA</div>
<div class="t" style="left:651px;top:407px;color:#1c1c50">序列号:</div>
<div class="t" style="left:586px;top:407px;width:400px;text-align:right;color:#2424a8">AA000000000000001025</div>
<div class="t" style="left:296px;top:421px;color:#1c1c50">型号:</div>
<div class="t" style="left:231px;top:421px;width:400px;text-align:right;color:#2424a8">SM2246XT</div>
<div class="t" style="left:651px;top:421px;color:#1c1c50">分区表类型:</div>
<div class="t" style="left:586px;top:421px;width:400px;text-align:right;color:#2424a8">MBR</div>
<div class="t" style="left:296px;top:435px;color:#1c1c50">MBR签名:</div>
<div class="t" style="left:231px;top:435px;width:400px;text-align:right;color:#2424a8">0D9DE562</div>
<div class="t" style="left:296px;top:449px;color:#1c1c50">属性:</div>
<div class="t" style="left:231px;top:449px;width:400px;text-align:right;color:#2424a8">固态</div>
<div class="a" style="left:301px;top:465px;width:718px;height:1px;background:#a0a0a0"></div>
<div class="t" style="left:296px;top:473px;color:#1c1c50">柱面数:</div>
<div class="t" style="left:231px;top:473px;width:400px;text-align:right;color:#2424a8">15403</div>
<div class="t" style="left:296px;top:487px;color:#1c1c50">磁头数:</div>
<div class="t" style="left:231px;top:487px;width:400px;text-align:right;color:#2424a8">255</div>
<div class="t" style="left:296px;top:501px;color:#1c1c50">每道扇区数:</div>
<div class="t" style="left:231px;top:501px;width:400px;text-align:right;color:#2424a8">63</div>
<div class="t" style="left:296px;top:515px;color:#1c1c50">总容量:</div>
<div class="t" style="left:231px;top:515px;width:400px;text-align:right;color:#2424a8">118.0GB</div>
<div class="t" style="left:296px;top:529px;color:#1c1c50">总扇区数:</div>
<div class="t" style="left:231px;top:529px;width:400px;text-align:right;color:#2424a8">247463936</div>
<div class="t" style="left:296px;top:543px;color:#1c1c50">附加扇区数:</div>
<div class="t" style="left:231px;top:543px;width:400px;text-align:right;color:#2424a8">14741</div>
<div class="t" style="left:651px;top:515px;color:#1c1c50">总字节数:</div>
<div class="t" style="left:586px;top:515px;width:400px;text-align:right;color:#2424a8">126701535232</div>
<div class="t" style="left:651px;top:529px;color:#1c1c50">扇区大小:</div>
<div class="t" style="left:586px;top:529px;width:400px;text-align:right;color:#2424a8">512 Bytes</div>
<div class="t" style="left:651px;top:543px;color:#1c1c50">物理扇区大小:</div>
<div class="t" style="left:586px;top:543px;width:400px;text-align:right;color:#2424a8">512 Bytes</div>
<div class="a" style="left:301px;top:560px;width:718px;height:1px;background:#a0a0a0"></div>
<div class="t" style="left:296px;top:582px;color:#1c1c50">空间类型:</div>
<div class="t" style="left:231px;top:582px;width:400px;text-align:right;color:#2424a8">空闲空间</div>
<div class="a" style="left:301px;top:597px;width:718px;height:1px;background:#a0a0a0"></div>
<div class="t" style="left:296px;top:606px;color:#1c1c50">总容量:</div>
<div class="t" style="left:231px;top:606px;width:400px;text-align:right;color:#2424a8">118.0GB</div>
<div class="t" style="left:296px;top:620px;color:#1c1c50">总扇区数:</div>
<div class="t" style="left:231px;top:620px;width:400px;text-align:right;color:#2424a8">247463936</div>
<div class="t" style="left:296px;top:634px;color:#1c1c50">起始扇区号:</div>
<div class="t" style="left:231px;top:634px;width:400px;text-align:right;color:#2424a8">0</div>
<div class="t" style="left:651px;top:606px;color:#1c1c50">总字节数:</div>
<div class="t" style="left:586px;top:606px;width:400px;text-align:right;color:#2424a8">126701535232</div>
<div class="a" style="left:291px;top:790px;width:735px;height:1px;background:#d8d8d8"></div>
<div class="a" style="left:13px;top:791px;width:1013px;height:1px;background:#fff"></div>
<div class="a" style="left:13px;top:792px;width:1013px;height:1px;background:#d5d5d5"></div>
<div class="a" style="left:13px;top:810px;width:1013px;height:1px;background:#fff"></div>
<div class="a" style="left:404px;top:793px;width:1px;height:17px;background:#d5d5d5"></div>
<div class="a" style="left:612px;top:793px;width:1px;height:17px;background:#d5d5d5"></div>
<div class="a" style="left:920px;top:793px;width:1px;height:17px;background:#d5d5d5"></div>
<div class="a" style="left:963px;top:793px;width:1px;height:17px;background:#d5d5d5"></div>
<div class="a" style="left:1006px;top:793px;width:1px;height:17px;background:#d5d5d5"></div>
<div class="t" style="left:15px;top:796px;">就绪</div>
<div class="t" style="left:924px;top:797px;">大写</div>
<div class="t" style="left:968px;top:797px;">数字</div>
<div class="a" style="left:1022px;top:801px;width:2px;height:2px;background:#a8a8a8"></div>
<div class="a" style="left:1019px;top:804px;width:2px;height:2px;background:#a8a8a8"></div>
<div class="a" style="left:1022px;top:804px;width:2px;height:2px;background:#a8a8a8"></div>
<div class="a" style="left:1016px;top:807px;width:2px;height:2px;background:#a8a8a8"></div>
<div class="a" style="left:1019px;top:807px;width:2px;height:2px;background:#a8a8a8"></div>
<div class="a" style="left:1022px;top:807px;width:2px;height:2px;background:#a8a8a8"></div>
</body></html>
